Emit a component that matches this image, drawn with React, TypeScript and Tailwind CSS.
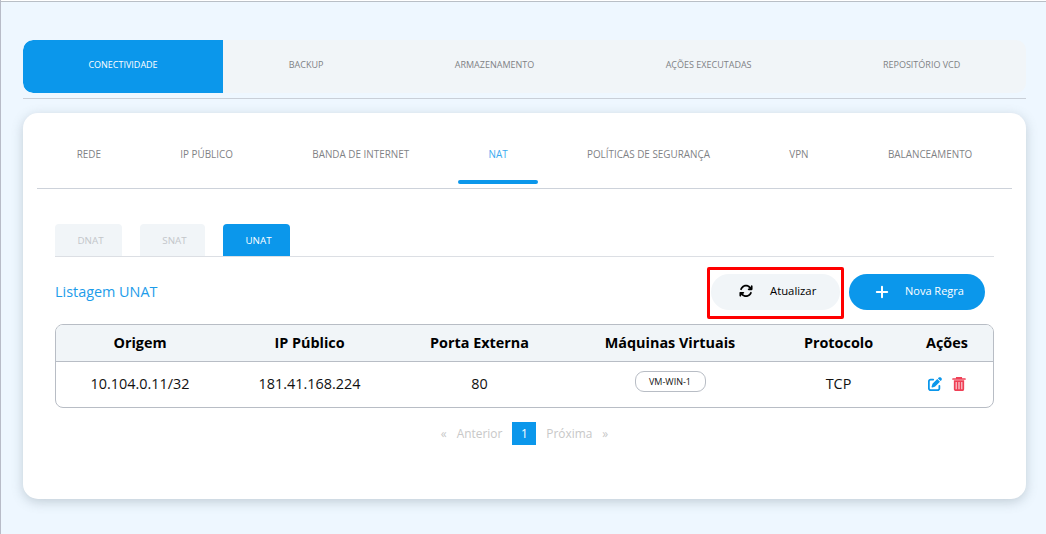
import { FaArrowsRotate, FaPenToSquare } from "react-icons/fa6";

const mainTabs = ["CONECTIVIDADE", "BACKUP", "ARMAZENAMENTO", "AÇÕES EXECUTADAS", "REPOSITÓRIO VCD"];
const subTabs = ["REDE", "IP PÚBLICO", "BANDA DE INTERNET", "NAT", "POLÍTICAS DE SEGURANÇA", "VPN", "BALANCEAMENTO"];
const natTabs = ["DNAT", "SNAT", "UNAT"];
const columns = "grid grid-cols-[168px_171px_169px_212px_125px_92px] items-center justify-items-center";

function TrashIcon() {
  return (
    <svg className="size-[14px] text-[#ef4056]" viewBox="0 0 14 14" fill="none" stroke="currentColor">
      <path d="M1 2h12M4.8 1.4V.7h4.4v.7" strokeWidth="1.7" strokeLinecap="round" />
      <path d="M2.7 4.2h8.6v8a1 1 0 0 1-1 1H3.7a1 1 0 0 1-1-1z" strokeWidth="1.7" fill="#f9b6bf" />
      <path d="M5.6 4v9M8.4 4v9" strokeWidth="1.3" />
    </svg>
  );
}

function PlusIcon() {
  return (
    <svg className="mr-[16px] size-[14px]" viewBox="0 0 14 14" fill="none" stroke="currentColor">
      <path d="M7 1.8v10.4M1.8 7h10.4" strokeWidth="2" strokeLinecap="round" />
    </svg>
  );
}

function MainTabs() {
  return (
    <nav className="h-[59px] border-b border-[#c9cfd8]">
      <div className="flex h-[53px] overflow-hidden rounded-[10px] bg-[#f1f5f8]">
        {mainTabs.map((t, i) => (
          <button
            key={t}
            className={`pb-1 text-[9px] leading-3 ${i === 0 ? "w-[200px] rounded-l-[10px] bg-[#0b97eb] text-white" : "flex-auto text-[#7f8285]"}`}
          >
            {t}
          </button>
        ))}
      </div>
    </nav>
  );
}

function SubTabs() {
  return (
    <nav className="mx-[14px] flex h-[76px] border-b border-[#cdd2da]">
      {subTabs.map((t) => (
        <button
          key={t}
          className={`relative flex-auto pt-[7px] text-[9.9px] leading-3 ${t === "NAT" ? "text-[#3aaaf0]" : "text-[#7f8285]"}`}
        >
          {t}
          {t === "NAT" && (
            <span className="absolute bottom-[4px] left-1/2 h-1 w-20 -translate-x-1/2 rounded-full bg-[#0b97eb]" />
          )}
        </button>
      ))}
    </nav>
  );
}

export default function App() {
  return (
    <div className="h-[534px] overflow-hidden border-l border-[#b8bcc8] bg-white pt-px font-['Open_Sans','Noto_Sans',sans-serif]">
      <div className="h-[533px] border-t border-[#b9bfc6] bg-[#eef7ff] pt-[38px] pr-5 pl-[22px]">
        <MainTabs />
        <main className="mt-[14px] h-[386px] rounded-[15px] bg-white shadow-[0_3px_12px_rgba(90,110,120,0.3)]">
          <SubTabs />
          <section className="mr-8 ml-8 pt-[35px]">
            <div className="flex h-[33px] gap-[18px] border-b border-[#dcdfe4]">
              {natTabs.map((t) => (
                <button
                  key={t}
                  className={`h-8 rounded-t-[4px] pt-[2px] pl-[4px] text-[9.8px] ${t === "SNAT" ? "w-[65px]" : "w-[67px]"} ${t === "UNAT" ? "bg-[#0b97eb] text-white" : "bg-[#f1f5f8] text-[#c3c6ca]"}`}
                >
                  {t}
                </button>
              ))}
            </div>
            <div className="flex h-[67px] items-center pt-[2px] pr-[9px]">
              <h1 className="flex-1 pt-px text-[14.4px] text-[#1c9cea]">Listagem UNAT</h1>
              <div className="mt-[2px] mr-[5px] flex h-[52px] w-[137px] items-center rounded-[2px] border-3 border-[#ff0000] pb-[2px] pl-px">
                <button className="flex h-9 w-[129px] items-center rounded-full bg-[#f1f5f8] pl-[28px] text-[11.3px] text-black">
                  <FaArrowsRotate className="mr-[17px] mb-px size-[14px]" />
                  Atualizar
                </button>
              </div>
              <button className="flex h-9 w-[136px] items-center rounded-full bg-[#0b97eb] pl-[26px] text-[11px] text-white">
                <PlusIcon />
                Nova Regra
              </button>
            </div>
            <div className="h-[84px] overflow-hidden rounded-[8px] border border-[#b8bdc5] text-[14.4px] text-[#111]">
              <div className={`${columns} h-[37px] border-b border-[#b8bdc5] bg-[#f1f5f8] pb-px font-bold text-black`}>
                <span>Origem</span>
                <span>IP Público</span>
                <span>Porta Externa</span>
                <span>Máquinas Virtuais</span>
                <span>Protocolo</span>
                <span>Ações</span>
              </div>
              <div className={`${columns} h-[44px]`}>
                <span>10.104.0.11/32</span>
                <span>181.41.168.224</span>
                <span>80</span>
                <span className="mb-[5px] flex h-[21px] w-[71px] items-center justify-center rounded-[9px] border border-[#b8bdc5] text-[9px]">
                  VM-WIN-1
                </span>
                <span>TCP</span>
                <span className="flex items-center gap-[10px]">
                  <FaPenToSquare className="size-[14px] text-[#0b97eb]" />
                  <TrashIcon />
                </span>
              </div>
            </div>
            <div className="mt-[13px] flex h-6 items-center justify-center text-[11.9px] text-[#c8c8c8]">
              <span className="pt-[2px]">«</span>
              <span className="ml-[10px] pt-[2px]">Anterior</span>
              <span className="mx-[10px] flex h-[23px] w-6 items-center justify-center bg-[#0b97eb] pt-px text-white">1</span>
              <span className="pt-[2px]">Próxima</span>
              <span className="ml-[10px] pt-[2px]">»</span>
            </div>
          </section>
        </main>
      </div>
    </div>
  );
}
